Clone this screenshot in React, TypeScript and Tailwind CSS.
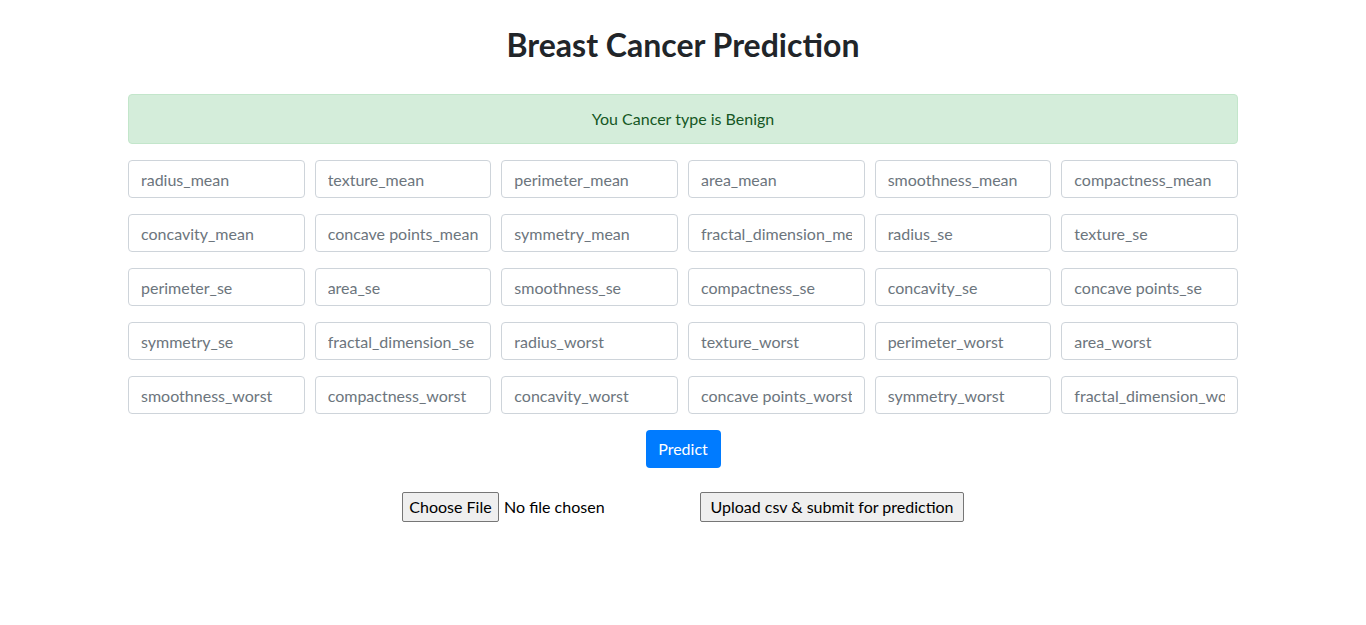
const fields = [
  'radius_mean',
  'texture_mean',
  'perimeter_mean',
  'area_mean',
  'smoothness_mean',
  'compactness_mean',
  'concavity_mean',
  'concave points_mean',
  'symmetry_mean',
  'fractal_dimension_mean',
  'radius_se',
  'texture_se',
  'perimeter_se',
  'area_se',
  'smoothness_se',
  'compactness_se',
  'concavity_se',
  'concave points_se',
  'symmetry_se',
  'fractal_dimension_se',
  'radius_worst',
  'texture_worst',
  'perimeter_worst',
  'area_worst',
  'smoothness_worst',
  'compactness_worst',
  'concavity_worst',
  'concave points_worst',
  'symmetry_worst',
  'fractal_dimension_worst',
];

export default function App() {
  return (
    <div className="min-h-screen bg-white text-[#212529] font-['Segoe_UI','Lato',sans-serif]">
      <div className="mx-auto w-[1140px] px-[15px]">
        <h1 className="pt-[26px] mb-[30px] text-center text-[32px] font-bold leading-[1.2]">
          Breast Cancer Prediction
        </h1>

        <div className="mb-4 rounded border border-[#c3e6cb] bg-[#d4edda] px-5 py-3 text-center text-base leading-6 text-[#155724]">
          You Cancer type is Benign
        </div>

        <form className="flex flex-col items-center">
          <div className="grid w-full grid-cols-6 gap-x-[10px] gap-y-4">
            {fields.map((name) => (
              <input
                key={name}
                name={name}
                placeholder={name}
                className="h-[38px] w-full rounded border border-[#ced4da] px-3 text-base text-[#495057] placeholder:text-[#6c757d] outline-none"
              />
            ))}
          </div>
          <button
            type="button"
            className="mt-4 h-[38px] w-[75px] rounded bg-[#007bff] text-base text-white"
          >
            Predict
          </button>
        </form>

        <div className="mt-6 flex items-center justify-center text-base text-black">
          <div className="flex w-[298px] items-center gap-[5px]">
            <span className="h-[30px] w-[97px] rounded-[2px] border border-[#767676] bg-[#efefef] text-center leading-[28px]">
              Choose File
            </span>
            <span>No file chosen</span>
          </div>
          <button
            type="button"
            className="h-[30px] w-[264px] rounded-[2px] border border-[#767676] bg-[#efefef]"
          >
            Upload csv &amp; submit for prediction
          </button>
        </div>
      </div>
    </div>
  );
}
